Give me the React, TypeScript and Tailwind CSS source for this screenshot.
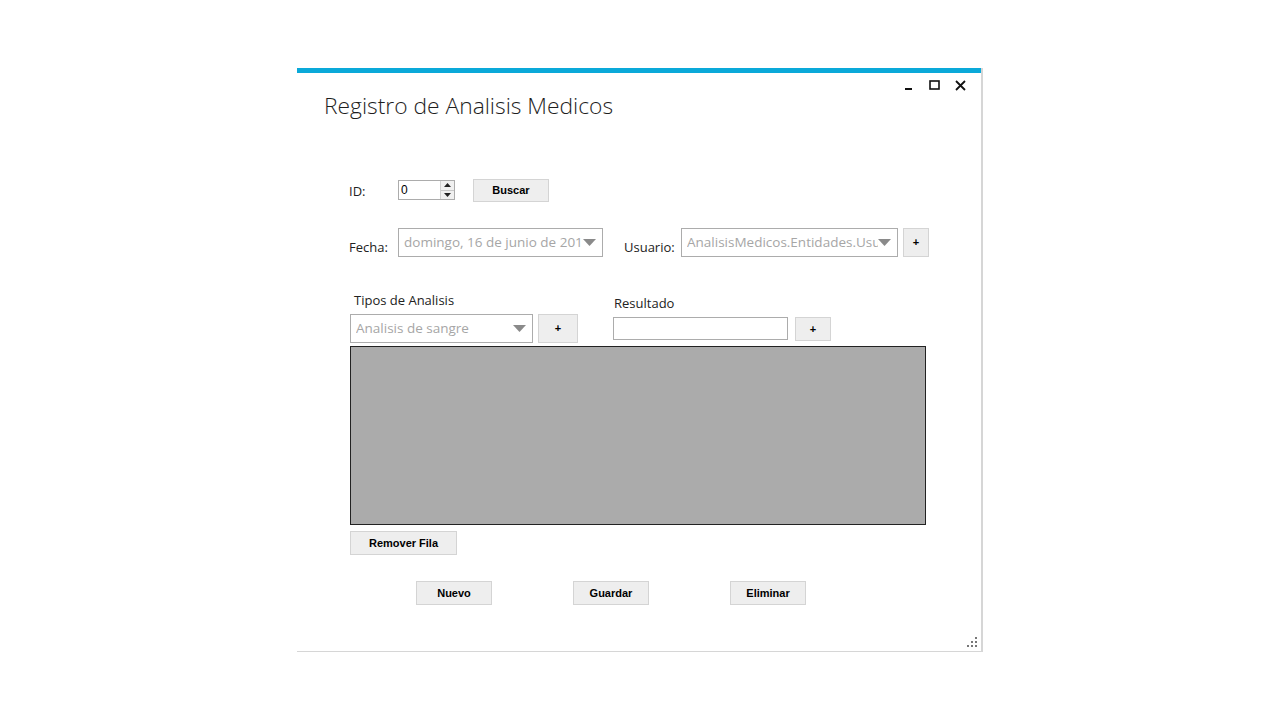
import React from 'react'

const ui = { fontFamily: '"Open Sans", "Liberation Sans", sans-serif' }
const btnFont = { fontFamily: '"Liberation Sans", Arial, sans-serif' }

function Btn({ label, className = '' }: { label: string; className?: string }) {
  return (
    <button
      style={btnFont}
      className={`flex items-center justify-center bg-[#eeeeee] border border-[#d4d4d4] text-[11px] font-bold text-black ${className}`}
    >
      {label}
    </button>
  )
}

function Combo({ text, className = '' }: { text: string; className?: string }) {
  return (
    <div className={`flex items-center bg-white border border-[#acacac] pl-[5px] pr-[6px] ${className}`}>
      <span className="flex-1 overflow-hidden whitespace-nowrap text-[13.5px] text-[#a6a6a6]">{text}</span>
      <svg width="13" height="7" viewBox="0 0 13 7" className="shrink-0">
        <path d="M0 0 L13 0 L6.5 7 Z" fill="#8a8a8a" />
      </svg>
    </div>
  )
}

export default function App() {
  return (
    <div className="w-[1280px] h-[720px] bg-white overflow-hidden" style={ui}>
      <div className="ml-[297px] mt-[68px] w-[686px] h-[584px] flex flex-col border-r-2 border-b border-[#d6d6d6] bg-white">
        <div className="h-[5px] bg-[#0aa9d9] shrink-0" />

        {/* title bar */}
        <div className="flex items-start justify-between">
          <h1 className="ml-[27px] mt-[18px] text-[22.8px] font-light text-[#1e1e1e] leading-[30px]">
            Registro de Analisis Medicos
          </h1>
          <div className="flex items-center gap-[15px] mr-[15px] mt-[6px] text-black">
            <svg width="10" height="12" viewBox="0 0 10 12">
              <rect x="1" y="9" width="7" height="2" fill="#111" />
            </svg>
            <svg width="11" height="11" viewBox="0 0 11 11">
              <rect x="1" y="1" width="9" height="8" fill="none" stroke="#111" strokeWidth="1.6" />
            </svg>
            <svg width="11" height="11" viewBox="0 0 11 11">
              <path d="M1 1 L10 10 M10 1 L1 10" stroke="#111" strokeWidth="1.8" />
            </svg>
          </div>
        </div>

        {/* ID row */}
        <div className="flex items-center mt-[58px] h-[22px]">
          <span className="ml-[52px] mt-[4px] text-[13px] text-[#222] w-[49px]">ID:</span>
          <div className="flex items-stretch w-[57px] h-[20px] border border-[#acacac] bg-white">
            <span className="flex-1 pl-[2px] text-[12px] leading-[18px] text-black" style={btnFont}>0</span>
            <div className="flex flex-col w-[14px] border-l border-[#d0d0d0] bg-[#f0f0f0]">
              <div className="flex-1 flex items-center justify-center border-b border-[#c8c8c8]">
                <svg width="7" height="4" viewBox="0 0 7 4"><path d="M0 4 L3.5 0 L7 4 Z" fill="#222" /></svg>
              </div>
              <div className="flex-1 flex items-center justify-center">
                <svg width="7" height="4" viewBox="0 0 7 4"><path d="M0 0 L7 0 L3.5 4 Z" fill="#222" /></svg>
              </div>
            </div>
          </div>
          <Btn label="Buscar" className="ml-[18px] w-[76px] h-[23px]" />
        </div>

        {/* Fecha / Usuario row */}
        <div className="flex items-center mt-[27px] h-[29px]">
          <span className="ml-[52px] mt-[10px] text-[13px] text-[#222] w-[49px]">Fecha:</span>
          <Combo text="domingo, 16 de junio de 2019" className="w-[205px] h-[29px]" />
          <span className="ml-[21px] mt-[10px] text-[13px] text-[#222] w-[57px]">Usuario:</span>
          <Combo text="AnalisisMedicos.Entidades.Usuarios" className="w-[217px] h-[29px]" />
          <Btn label="+" className="ml-[5px] w-[26px] h-[29px]" />
        </div>

        {/* Tipos / Resultado row */}
        <div className="flex mt-[34px]">
          <div className="flex flex-col ml-[53px]">
            <span className="ml-[4px] text-[13px] leading-[18px] text-[#222]">Tipos de Analisis</span>
            <div className="flex mt-[5px]">
              <Combo text="Analisis de sangre" className="w-[183px] h-[29px]" />
              <Btn label="+" className="ml-[5px] w-[40px] h-[29px]" />
            </div>
          </div>
          <div className="flex flex-col ml-[35px] mt-[3px]">
            <span className="ml-[1px] text-[13px] leading-[18px] text-[#222]">Resultado</span>
            <div className="flex items-start mt-[5px]">
              <div className="w-[175px] h-[23px] border border-[#acacac] bg-white" />
              <Btn label="+" className="ml-[7px] w-[36px] h-[24px]" />
            </div>
          </div>
        </div>

        {/* data grid */}
        <div className="ml-[53px] mt-[3px] w-[576px] h-[179px] bg-[#ababab] border border-[#222]" />

        <Btn label="Remover Fila" className="ml-[53px] mt-[6px] w-[107px] h-[24px]" />

        {/* bottom actions */}
        <div className="flex mt-[26px] ml-[119px] gap-[81px]">
          <Btn label="Nuevo" className="w-[76px] h-[24px]" />
          <Btn label="Guardar" className="w-[76px] h-[24px]" />
          <Btn label="Eliminar" className="w-[76px] h-[24px]" />
        </div>

        {/* resize grip */}
        <div className="mt-auto self-end mr-[3px] mb-[3px]">
          <svg width="12" height="12" viewBox="0 0 12 12">
            <rect x="9" y="1" width="2" height="2" fill="#777" />
            <rect x="5" y="5" width="2" height="2" fill="#777" />
            <rect x="9" y="5" width="2" height="2" fill="#777" />
            <rect x="1" y="9" width="2" height="2" fill="#777" />
            <rect x="5" y="9" width="2" height="2" fill="#777" />
            <rect x="9" y="9" width="2" height="2" fill="#777" />
          </svg>
        </div>
      </div>
    </div>
  )
}
